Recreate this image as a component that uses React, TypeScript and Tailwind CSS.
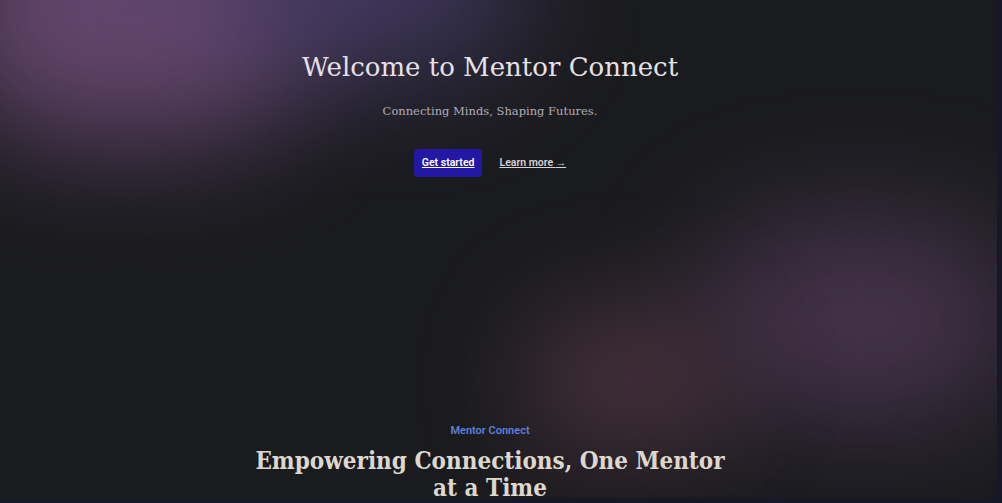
export default function App() {
  return (
    <div className="h-[503px] w-full overflow-hidden bg-[#151829] pr-[5px] pb-[5px]">
      <div className="relative h-full w-full overflow-hidden rounded-br-lg bg-[#1a1b1e]">
        {/* background glows */}
        <div className="pointer-events-none absolute -left-[60px] -top-[120px] h-[260px] w-[380px] rounded-full bg-[#6b4a74] opacity-90 blur-[60px]" />
        <div className="pointer-events-none absolute left-[220px] -top-[110px] h-[180px] w-[300px] rounded-full bg-[#4a3f6e] opacity-80 blur-[60px]" />
        <div className="pointer-events-none absolute left-[700px] top-[220px] h-[200px] w-[320px] rounded-full bg-[#4a3650] opacity-90 blur-[60px]" />
        <div className="pointer-events-none absolute left-[520px] top-[300px] h-[160px] w-[220px] rounded-full bg-[#45303c] opacity-90 blur-[50px]" />

        <div className="relative flex h-full flex-col items-center pr-[17px] font-['Roboto',sans-serif]">
          <section className="flex flex-col items-center pt-[49px]">
            <h1 className="font-['DejaVu_Serif',serif] text-[26px] leading-[36px] text-[#e6e1e6]">
              Welcome to Mentor Connect
            </h1>
            <p className="mt-[16px] font-['DejaVu_Serif',serif] text-[11.5px] leading-[20px] text-[#b3adb3]">
              Connecting Minds, Shaping Futures.
            </p>
            <div className="mt-[28px] flex items-center gap-[17px]">
              <a
                href="#"
                className="rounded-[4px] bg-[#2317a6] px-[8px] py-[6px] text-[10.5px] leading-[16px] font-semibold text-white underline"
              >
                Get started
              </a>
              <a href="#" className="text-[10.5px] leading-[16px] font-semibold text-[#d6d1d6] underline">
                Learn more <span className="font-bold">→</span>
              </a>
            </div>
          </section>

          <section className="mt-[246px] flex max-w-[480px] flex-col items-center text-center">
            <p className="text-[11px] leading-[16px] font-semibold text-[#5b80d8]">Mentor Connect</p>
            <h2 className="mt-[8px] font-['DejaVu_Serif',serif] text-[24px] leading-[27px] font-bold font-stretch-condensed text-[#ddd7cd]">
              Empowering Connections, One Mentor at a Time
            </h2>
          </section>
        </div>
      </div>
    </div>
  );
}
